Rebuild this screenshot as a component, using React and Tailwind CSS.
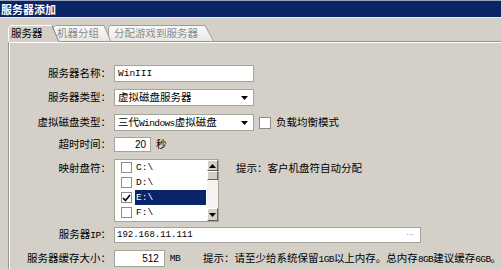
import React from "react";

const CJK = "font-['Noto_Sans_CJK_SC',sans-serif]";
const MONO = "font-['Liberation_Mono','Noto_Sans_CJK_SC',monospace]";
const INL = "font-['Liberation_Mono',monospace] text-[9.5px] tracking-[-0.6px]";

function Tab({ width, top, text, active, z, ml, pl, textCls }) {
  const h = active ? 17 : 16;
  const pts = `0.5,${h} 0.5,2.5 2.5,0.5 ${top},0.5 ${width - 0.5},${h}`;
  return (
    <div className={`relative shrink-0 ${z} ${ml}`} style={{ width, height: h }}>
      <svg className="absolute inset-0" width={width} height={h}>
        <defs>
          <linearGradient id="tg" x1="0" y1="0" x2="0" y2="1">
            <stop offset="0" stopColor="#fbfbfa" />
            <stop offset="1" stopColor="#e9e7e2" />
          </linearGradient>
        </defs>
        <polygon points={pts} fill={active ? "#d4d0c8" : "url(#tg)"} stroke="none" />
        {active ? (
          <>
            <polyline points={`0.5,${h} 0.5,2.5 2.5,0.5 ${top},0.5`} fill="none" stroke="#ffffff" />
            <line x1={top} y1="0.5" x2={width - 0.5} y2={h - 1} stroke="#808080" />
          </>
        ) : (
          <polyline
            points={`0.5,${h} 0.5,2.5 2.5,0.5 ${top},0.5 ${width - 0.5},${h}`}
            fill="none"
            stroke="#a09d96"
          />
        )}
      </svg>
      <div className={`relative h-[16px] flex items-center ${pl} ${CJK} text-[10.5px] leading-none ${textCls}`}>
        {text}
      </div>
    </div>
  );
}

function Label({ children, className = "" }) {
  return (
    <div className={`w-[101px] shrink-0 text-right ${CJK} text-[10.5px] leading-none text-black whitespace-nowrap ${className}`}>
      {children}
    </div>
  );
}

function DownTri() {
  return (
    <svg width="7" height="4" viewBox="0 0 7 4">
      <polygon points="0,0 7,0 3.5,4" fill="#000" />
    </svg>
  );
}

function UpTri() {
  return (
    <svg width="7" height="4" viewBox="0 0 7 4">
      <polygon points="0,4 7,4 3.5,0" fill="#000" />
    </svg>
  );
}

function Box({ checked }) {
  return (
    <div className="w-[11px] h-[11px] shrink-0 bg-white border border-[#8e8c86] flex items-center justify-center">
      {checked && (
        <svg width="9" height="8" viewBox="0 0 9 8">
          <polyline points="1,4 3.5,6.5 8,1" fill="none" stroke="#000" strokeWidth="1.6" />
        </svg>
      )}
    </div>
  );
}

function SBtn({ children, className = "" }) {
  return (
    <div
      className={`w-[11px] shrink-0 bg-[#d4d0c8] border-t border-l border-t-white border-l-white border-b border-r border-b-[#606060] border-r-[#606060] flex items-center justify-center ${className}`}
    >
      {children}
    </div>
  );
}

export default function App() {
  const drives = ["C:\\", "D:\\", "E:\\", "F:\\"];
  return (
    <div className="w-[501px] h-[269px] overflow-hidden bg-[#d4d0c8] flex flex-col">
      {/* title bar */}
      <div className="h-[17px] shrink-0 bg-[#0b2466] border-t border-[#9aa0b8] flex items-center pl-[1px]">
        <span className={`${CJK} text-[11px] font-bold text-white leading-none`}>服务器添加</span>
      </div>
      <div className="h-[1px] shrink-0 bg-[#ece9e4]" />
      {/* tabs */}
      <div className="mt-[7px] h-[16px] shrink-0 flex pl-[8px]">
        <Tab width={51} top={44} text="服务器" active z="z-30" ml="" pl="pl-[3px]" textCls="text-black" />
        <Tab width={58} top={51} text="机器分组" z="z-20" ml="ml-[-6px]" pl="pl-[4px]" textCls="text-[#8a8a8a]" />
        <Tab width={106} top={97} text="分配游戏到服务器" z="z-10" ml="ml-[-3px]" pl="pl-[6px]" textCls="text-[#8a8a8a]" />
      </div>
      {/* panel */}
      <div className="ml-[8px] flex-1 border-t border-l border-[#9a978f] bg-[#d4d0c8] relative">
        <div className="border-t border-l border-white h-full flex flex-col pt-[22px]">
          {/* row 1 */}
          <div className="flex items-center h-[17px]">
            <Label>服务器名称：</Label>
            <div className="ml-[3px] w-[140px] h-[17px] bg-white border border-[#a6a39c] flex items-center pl-[3px]">
              <span className={`${MONO} text-[9.5px] leading-none`}>WinIII</span>
            </div>
          </div>
          {/* row 2 */}
          <div className="flex items-center h-[17px] mt-[7px]">
            <Label>服务器类型：</Label>
            <div className="ml-[3px] w-[140px] h-[17px] bg-white border border-[#a6a39c] flex items-center pl-[3px] pr-[5px]">
              <span className={`${CJK} text-[10.5px] leading-none flex-1`}>虚拟磁盘服务器</span>
              <DownTri />
            </div>
          </div>
          {/* row 3 */}
          <div className="flex items-center h-[17px] mt-[8px]">
            <Label>虚拟磁盘类型：</Label>
            <div className="ml-[3px] w-[140px] h-[17px] bg-white border border-[#a6a39c] flex items-center pl-[3px] pr-[5px]">
              <span className={`${CJK} text-[10.5px] leading-none flex-1 whitespace-nowrap`}>
                三代<span className={INL}>Windows</span>虚拟磁盘
              </span>
              <DownTri />
            </div>
            <div className="ml-[5px] w-[12px] h-[12px] bg-white border border-[#8e8c86]" />
            <span className={`ml-[5px] ${CJK} text-[10.5px] leading-none`}>负载均衡模式</span>
          </div>
          {/* row 4 */}
          <div className="flex items-center h-[15px] mt-[6px]">
            <Label>超时时间：</Label>
            <div className="ml-[3px] w-[37px] h-[15px] bg-white border border-[#a6a39c] flex items-center justify-end pr-[4px]">
              <span className="font-['Liberation_Sans',sans-serif] text-[10px] leading-none">20</span>
            </div>
            <span className={`ml-[5px] ${CJK} text-[10.5px] leading-none`}>秒</span>
          </div>
          {/* row 5 */}
          <div className="flex items-start h-[63px] mt-[7px]">
            <Label className="mt-[4px]">映射盘符：</Label>
            <div className="ml-[3px] w-[105px] h-[63px] bg-white border border-[#a6a39c] flex">
              <div className="flex-1 flex flex-col">
                {drives.map((d, i) => (
                  <div key={d} className="h-[15px] flex items-center pl-[6px]">
                    <Box checked={i === 2} />
                    <div
                      className={`ml-[3px] h-[15px] flex-1 flex items-center pl-[1px] ${
                        i === 2 ? "bg-[#0a246a] text-white" : "text-black"
                      }`}
                    >
                      <span className={`${MONO} text-[9.5px] leading-none`}>{d}</span>
                    </div>
                  </div>
                ))}
              </div>
              <div className="w-[11px] ml-[1px] flex flex-col bg-[#f4f3f0]">
                <SBtn className="h-[11px]">
                  <UpTri />
                </SBtn>
                <SBtn className="h-[9px]" />
                <div className="flex-1" />
                <SBtn className="h-[13px]">
                  <DownTri />
                </SBtn>
              </div>
            </div>
            <span className={`ml-[17px] mt-[4px] ${CJK} text-[10.5px] leading-none`}>提示：客户机盘符自动分配</span>
          </div>
          {/* row 6 */}
          <div className="flex items-center h-[16px] mt-[5px]">
            <Label>
              服务器<span className={INL}>IP</span>：
            </Label>
            <div className="ml-[3px] w-[307px] h-[16px] bg-white border border-[#a6a39c] flex items-center pl-[2px] pr-[6px]">
              <span className={`${MONO} text-[9px] leading-none flex-1`}>192.168.11.111</span>
              <span className="font-['Liberation_Sans',sans-serif] text-[8px] leading-none text-[#666]">···</span>
            </div>
          </div>
          {/* row 7 */}
          <div className="flex items-center h-[17px] mt-[7px]">
            <Label>服务器缓存大小：</Label>
            <div className="ml-[3px] w-[57px] h-[17px] bg-white border border-[#a6a39c] flex items-center justify-end pr-[5px]">
              <span className="font-['Liberation_Sans',sans-serif] text-[10px] leading-none">512</span>
            </div>
            <span className={`ml-[5px] ${INL} leading-none`}>MB</span>
            <span className={`ml-[23px] ${CJK} text-[10.5px] leading-none whitespace-nowrap`}>
              提示：请至少给系统保留<span className={INL}>1GB</span>以上内存。总内存<span className={INL}>8GB</span>建议缓存<span className={INL}>6GB</span>。
            </span>
          </div>
        </div>
      </div>
    </div>
  );
}
